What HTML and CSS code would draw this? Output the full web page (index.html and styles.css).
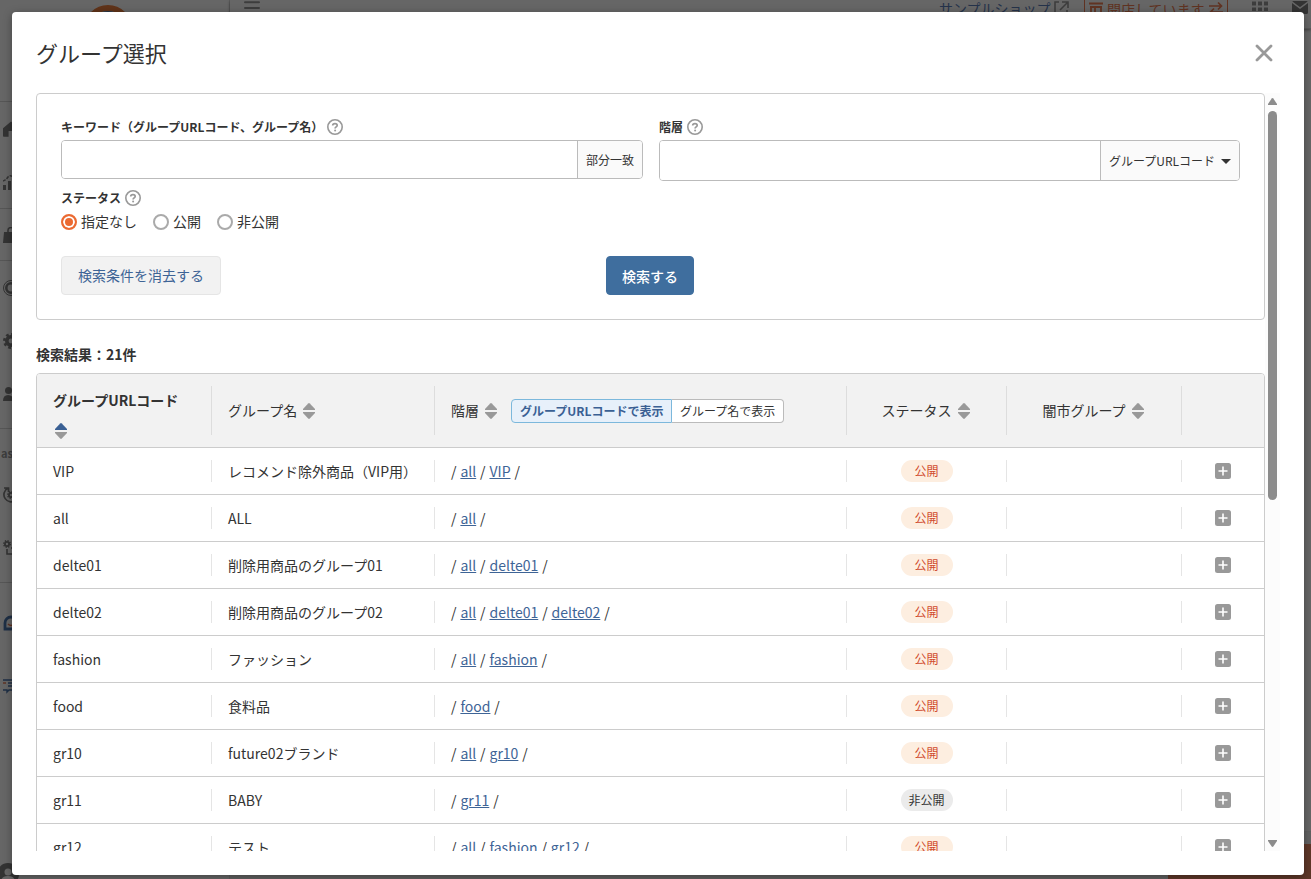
FILE: index.html
```html
<!DOCTYPE html>
<html lang="ja">
<head>
  <meta charset="UTF-8">
  <meta name="viewport" content="width=device-width, initial-scale=1">
  <title>グループ選択</title>
  <link rel="stylesheet" href="styles.css">
</head>
<body>

<!-- アイコン -->
<svg class="symbols">
  <symbol id="i-help" viewBox="0 0 16 16"><circle cx="8" cy="8" r="7.2" fill="none" stroke="#999" stroke-width="1.6"/><path d="M5.7 6.5C5.7 5.1 6.8 4.6 8 4.6s2.2.6 2.2 1.8c0 1.4-2.1 1.5-2.1 3" fill="none" stroke="#999" stroke-width="1.7"/><circle cx="8.1" cy="11.5" r="1" fill="#999"/></symbol>
  <symbol id="i-sort" viewBox="0 0 12 16"><path d="M5.2.5q.8-.8 1.6 0L12 6v1H0V6z"/><path d="M5.2 15.5q.8.8 1.6 0L12 10V9H0v1z" fill="#999"/></symbol>
  <symbol id="i-plus" viewBox="0 0 16 16"><rect width="16" height="16" rx="2.5" fill="#999"/><path d="M8 3.5v9M3.5 8h9" stroke="#fff" stroke-width="1.6"/></symbol>
  <symbol id="i-gear" viewBox="0 0 16 16"><circle cx="8" cy="8" r="4.2" fill="none" stroke="#808080" stroke-width="3.6"/><circle cx="8" cy="8" r="6.6" fill="none" stroke="#808080" stroke-width="2.8" stroke-dasharray="2.7 2.48"/></symbol>
</svg>

<!-- 背面のページ -->
<div class="page">
  <nav class="sidebar">
    <div class="logo"><svg width="48" height="28" viewBox="0 0 48 28"><circle cx="24" cy="29" r="21" fill="none" stroke="#f08040" stroke-width="6"/><circle cx="24" cy="29" r="18" fill="#6484a8"/></svg></div>
    <div class="nav-section">
      <div class="nav-item"><svg width="16" height="16" viewBox="0 0 16 16"><path d="M8 .5 0 7.2V15q0 .7.8.7h4.8V10h4.8v5.7h5V7z"/></svg></div>
      <div class="nav-item"><svg width="16" height="16" viewBox="0 0 16 16"><path d="M0 11h3v5H0zM5 7h3v9H5zM10 8h3v8h-3z"/><path d="M0 7q3-1 5-4t7 1" fill="none" stroke="#808080" stroke-dasharray="3 1.2" stroke-width="1.6"/></svg></div>
    </div>
    <div class="nav-section">
      <div class="nav-item short"><svg width="16" height="16" viewBox="0 0 16 16"><path d="M1 5h14l1 11H0z"/><path d="M5 8V3q0-2.4 3-2.4T11 3v5" fill="none" stroke="#808080" stroke-width="1.5"/></svg></div>
    </div>
    <div class="nav-section pad">
      <div class="nav-item"><svg width="16" height="16" viewBox="0 0 16 16" fill="none" stroke="#808080"><circle cx="8" cy="8" r="7.5"/><circle cx="8" cy="8" r="4.7" stroke-width="2.6"/></svg></div>
      <div class="nav-item"><svg width="16" height="16"><use href="#i-gear"/></svg></div>
      <div class="nav-item"><svg width="16" height="16" viewBox="0 0 16 16"><circle cx="5.5" cy="4.5" r="3.5"/><path d="M0 15q0-6 5-6t6 6z"/><circle cx="12" cy="11" r="3"/></svg></div>
    </div>
    <div class="nav-section last">
      <div class="nav-text">as</div>
      <div class="nav-item"><svg width="16" height="16" viewBox="0 0 16 16"><path d="M5 1a7.3 7.3 0 1 0 8 1M1 1h4.5v4" fill="none" stroke="#808080" stroke-width="1.7"/><svg x="4" y="4" width="8" height="8"><use href="#i-gear"/></svg></svg></div>
      <div class="nav-item"><svg width="16" height="16" viewBox="0 0 16 16"><svg width="8" height="8"><use href="#i-gear"/></svg><path d="M4 9v5h9V8H8" fill="none" stroke="#808080" stroke-width="1.6"/></svg></div>
    </div>
    <div class="nav-item tall"><svg width="16" height="16" viewBox="0 0 16 16"><path d="M2 14V8a6 6 0 1 1 6 6z" fill="none" stroke="#4c76ad" stroke-width="2.8"/><path d="M5 9q3 3 6 0" fill="none" stroke="#e87950" stroke-width="1.6"/></svg></div>
    <div class="nav-item tall"><svg width="16" height="16" viewBox="0 0 16 16" fill="none" stroke="#4c76ad" stroke-width="1.4"><path d="M0 2h15v10H6l-2 2v-2H0M5 5h8M5 8h8"/><path d="M0 5h3" stroke="#e87950"/></svg></div>
    <div class="account"><svg width="22" height="22" viewBox="0 0 22 22"><circle cx="11" cy="11" r="11" fill="#808080"/><circle cx="11" cy="9" r="3.5" fill="#fff"/><path d="M4 19q0-6 7-6t7 6z" fill="#fff"/></svg></div>
  </nav>
  <div class="main">
    <header class="topbar">
      <svg class="menu" width="16" height="11" viewBox="0 0 16 11"><path d="M1 2.3h14M1 8.1h14" stroke="#999" stroke-width="2" stroke-linecap="round"/></svg>
      <span class="shop">サンプルショップ</span>
      <svg class="ext" width="16" height="16" viewBox="0 0 16 16" fill="none" stroke="#999" stroke-width="1.6"><path d="M5 2H1v12h12v-4M8 2h6v6M14 2 6 10"/></svg>
      <span class="open-state">
        <svg width="14" height="14" viewBox="0 0 14 14" fill="none" stroke="#f08055" stroke-width="1.8"><path d="M0 1.5h14M1 5h12M2 5v9M6 5v6h6V5"/></svg>
        開店しています
        <svg width="14" height="14" viewBox="0 0 14 14" fill="none" stroke="#f08055" stroke-width="1.7"><path d="M0 4h12M9 .5 12.5 4 9 7.5M14 10H2M5 6.5 1.5 10 5 13.5"/></svg>
      </span>
      <svg class="apps" width="16" height="16" viewBox="0 0 16 16"><path d="M0 2.5h16M0 8.5h16M0 14.5h16" stroke="#999" stroke-width="4" stroke-dasharray="4 2"/></svg>
      <svg class="mail" width="16" height="13" viewBox="0 0 16 13"><rect width="16" height="13" rx="1.5" fill="#808080"/><path d="m0 1 8 6 8-6" fill="none" stroke="#fff" stroke-width="1.5"/></svg>
    </header>
    <footer class="actionbar"><div class="save"></div></footer>
  </div>
</div>

<!-- グループ選択モーダル -->
<div class="overlay">
<div class="modal">
  <div class="modal-header">
    <h1>グループ選択</h1>
    <svg class="close" width="18" height="18" viewBox="0 0 18 18"><path d="m2 2 14 14M16 2 2 16" stroke="#999" stroke-width="2.8" stroke-linecap="round"/></svg>
  </div>

  <div class="modal-body">
    <div class="content">
      <form class="search">
        <div class="fields">
          <div class="field">
            <div class="label">キーワード（グループURLコード、グループ名）<svg width="16" height="16"><use href="#i-help"/></svg></div>
            <div class="input-group"><input type="text"><span class="addon match">部分一致</span></div>
          </div>
          <div class="field">
            <div class="label">階層<svg width="16" height="16"><use href="#i-help"/></svg></div>
            <div class="input-group level"><input type="text"><span class="addon select">グループURLコード<i class="caret"></i></span></div>
          </div>
        </div>
        <div class="label">ステータス<svg width="16" height="16"><use href="#i-help"/></svg></div>
        <div class="radios">
          <label><i class="radio checked"></i><span>指定なし</span></label>
          <label><i class="radio"></i><span>公開</span></label>
          <label><i class="radio"></i><span>非公開</span></label>
        </div>
        <div class="buttons">
          <button type="button" class="btn btn-clear">検索条件を消去する</button>
          <button type="button" class="btn btn-search">検索する</button>
        </div>
      </form>

      <p class="count">検索結果：21件</p>

      <table class="groups">
        <colgroup><col class="c1"><col class="c2"><col class="c3"><col class="c4"><col class="c5"><col class="c6"></colgroup>
        <thead>
          <tr>
            <th><div class="cell sorted"><b>グループURLコード</b><svg class="sort asc"><use href="#i-sort"/></svg></div></th>
            <th><div class="cell"><span>グループ名</span><svg class="sort"><use href="#i-sort"/></svg></div></th>
            <th><div class="cell"><span>階層</span><svg class="sort"><use href="#i-sort"/></svg><div class="toggle"><div class="on">グループURLコードで表示</div><div>グループ名で表示</div></div></div></th>
            <th><div class="cell center"><span>ステータス</span><svg class="sort"><use href="#i-sort"/></svg></div></th>
            <th><div class="cell center"><span>闇市グループ</span><svg class="sort"><use href="#i-sort"/></svg></div></th>
            <th><div class="cell"></div></th>
          </tr>
        </thead>
        <tbody>
          <tr>
            <td><div class="cell">VIP</div></td>
            <td><div class="cell">レコメンド除外商品（VIP用）</div></td>
            <td><div class="cell path"><span>/ <a>all</a> / <a>VIP</a> /</span></div></td>
            <td><div class="cell center"><span class="badge">公開</span></div></td>
            <td><div class="cell"></div></td>
            <td><div class="cell center"><svg width="16" height="16"><use href="#i-plus"/></svg></div></td>
          </tr>
          <tr>
            <td><div class="cell">all</div></td>
            <td><div class="cell">ALL</div></td>
            <td><div class="cell path"><span>/ <a>all</a> /</span></div></td>
            <td><div class="cell center"><span class="badge">公開</span></div></td>
            <td><div class="cell"></div></td>
            <td><div class="cell center"><svg width="16" height="16"><use href="#i-plus"/></svg></div></td>
          </tr>
          <tr>
            <td><div class="cell">delte01</div></td>
            <td><div class="cell">削除用商品のグループ01</div></td>
            <td><div class="cell path"><span>/ <a>all</a> / <a>delte01</a> /</span></div></td>
            <td><div class="cell center"><span class="badge">公開</span></div></td>
            <td><div class="cell"></div></td>
            <td><div class="cell center"><svg width="16" height="16"><use href="#i-plus"/></svg></div></td>
          </tr>
          <tr>
            <td><div class="cell">delte02</div></td>
            <td><div class="cell">削除用商品のグループ02</div></td>
            <td><div class="cell path"><span>/ <a>all</a> / <a>delte01</a> / <a>delte02</a> /</span></div></td>
            <td><div class="cell center"><span class="badge">公開</span></div></td>
            <td><div class="cell"></div></td>
            <td><div class="cell center"><svg width="16" height="16"><use href="#i-plus"/></svg></div></td>
          </tr>
          <tr>
            <td><div class="cell">fashion</div></td>
            <td><div class="cell">ファッション</div></td>
            <td><div class="cell path"><span>/ <a>all</a> / <a>fashion</a> /</span></div></td>
            <td><div class="cell center"><span class="badge">公開</span></div></td>
            <td><div class="cell"></div></td>
            <td><div class="cell center"><svg width="16" height="16"><use href="#i-plus"/></svg></div></td>
          </tr>
          <tr>
            <td><div class="cell">food</div></td>
            <td><div class="cell">食料品</div></td>
            <td><div class="cell path"><span>/ <a>food</a> /</span></div></td>
            <td><div class="cell center"><span class="badge">公開</span></div></td>
            <td><div class="cell"></div></td>
            <td><div class="cell center"><svg width="16" height="16"><use href="#i-plus"/></svg></div></td>
          </tr>
          <tr>
            <td><div class="cell">gr10</div></td>
            <td><div class="cell">future02ブランド</div></td>
            <td><div class="cell path"><span>/ <a>all</a> / <a>gr10</a> /</span></div></td>
            <td><div class="cell center"><span class="badge">公開</span></div></td>
            <td><div class="cell"></div></td>
            <td><div class="cell center"><svg width="16" height="16"><use href="#i-plus"/></svg></div></td>
          </tr>
          <tr>
            <td><div class="cell">gr11</div></td>
            <td><div class="cell">BABY</div></td>
            <td><div class="cell path"><span>/ <a>gr11</a> /</span></div></td>
            <td><div class="cell center"><span class="badge private">非公開</span></div></td>
            <td><div class="cell"></div></td>
            <td><div class="cell center"><svg width="16" height="16"><use href="#i-plus"/></svg></div></td>
          </tr>
          <tr>
            <td><div class="cell">gr12</div></td>
            <td><div class="cell">テスト</div></td>
            <td><div class="cell path"><span>/ <a>all</a> / <a>fashion</a> / <a>gr12</a> /</span></div></td>
            <td><div class="cell center"><span class="badge">公開</span></div></td>
            <td><div class="cell"></div></td>
            <td><div class="cell center"><svg width="16" height="16"><use href="#i-plus"/></svg></div></td>
          </tr>
        </tbody>
      </table>
    </div>

    <div class="scrollbar">
      <svg width="9" height="7" viewBox="0 0 9 7"><path d="M3.7.5q.8-.8 1.6 0L9 6v1H0V6z" fill="#8b8b8b"/></svg>
      <div class="thumb"></div>
      <svg class="down" width="9" height="7" viewBox="0 0 9 7"><path d="M3.7 6.5q.8.8 1.6 0L9 1V0H0v1z" fill="#8b8b8b"/></svg>
    </div>
  </div>
</div>
</div>

</body>
</html>
```
FILE: styles.css
```css
* { box-sizing: border-box; }
body {
  margin: 0;
  height: 879px;
  overflow: hidden;
  font-family: "Noto Sans CJK JP", sans-serif;
  font-size: 14px;
  line-height: 22px;
  color: #333;
}
svg { display: block; flex: none; }
.symbols { position: absolute; width: 0; height: 0; }

/* 背面のページ */
.page { display: flex; height: 879px; background: #fff; }
.sidebar {
  width: 230px;
  border-right: 1px solid #e8e8e8;
  display: flex;
  flex-direction: column;
  fill: #808080;
}
.logo {
  height: 102px;
  padding-left: 84px;
  border-bottom: 1px solid #d8d8d8;
}
.nav-section { border-bottom: 1px solid #d8d8d8; }
.nav-section.pad { padding: 0 0 8px; }
.nav-section.last { height: 154px; padding-top: 13px; }
.nav-item {
  height: 53px;
  padding-left: 3px;
  display: flex;
  align-items: center;
}
.nav-item.short { height: 51px; }
.nav-item.tall { height: 63px; }
.nav-section.last + .nav-item { margin-top: 8px; }
.nav-text {
  height: 26px;
  padding-left: 1px;
  font-size: 11px;
  font-weight: bold;
  color: #999;
}
.account { margin-top: auto; margin-left: -3px; height: 16px; }
.main { flex: 1; display: flex; flex-direction: column; }
.topbar {
  height: 29px;
  padding-left: 14px;
  display: flex;
  align-items: flex-start;
  border-bottom: 1px solid #ddd;
  box-shadow: 0 1px 3px rgba(0,0,0,0.4);
}
.menu { margin-right: 679px; }
.shop { font-size: 14px; line-height: 16px; color: #5c81bb; width: 112px; }
.ext { margin-left: 3px; }
.open-state {
  height: 26px;
  width: 144px;
  margin: -8px 0 0 14px;
  padding: 8px 4px 0;
  border: 1px solid #f08055;
  display: flex;
  gap: 4px;
  line-height: 16px;
  color: #f08055;
  white-space: nowrap;
}
.open-state svg { margin-top: 1px; }
.apps { margin: -5px 0 0 24px; }
.mail { margin: 1px 0 0 24px; }
.actionbar {
  margin-top: auto;
  height: 48px;
  padding-top: 12px;
  border-top: 1px solid #eee;
  background: #f3f3f3;
  display: flex;
  justify-content: flex-end;
}
.save { width: 143px; background: #ec8a64; }

/* モーダル */
.overlay {
  position: absolute;
  inset: 0;
  padding: 12px 7px 4px 12px;
  background: rgba(0,0,0,0.6);
}
.modal {
  height: 863px;
  padding: 0 24px;
  background: #fff;
  border-radius: 4px;
  box-shadow: 0 2px 8px rgba(0,0,0,0.35);
}
.modal-header {
  height: 81px;
  padding-right: 7px;
  display: flex;
  align-items: center;
  justify-content: space-between;
}
.modal-header h1 {
  margin: 0 0 1px;
  font-size: 22px;
  font-weight: normal;
  line-height: 32px;
}
.modal-body { height: 758px; display: flex; overflow: hidden; }
.content { width: 1229px; flex: none; }
.scrollbar {
  width: 15px;
  padding: 5px 3px 4px;
  background: #fcfcfc;
  display: flex;
  flex-direction: column;
}
.thumb { height: 389px; margin-top: 6px; border-radius: 5px; background: #8b8b8b; width: 9px; }
.down { margin-top: auto; }

/* 検索フォーム */
.search {
  height: 227px;
  padding: 24px;
  border: 1px solid #ccc;
  border-radius: 4px;
}
.fields { display: flex; gap: 16px; margin-bottom: 8px; }
.field { width: 582px; }
.field + .field { width: 581px; }
.label {
  height: 18px;
  display: flex;
  align-items: center;
  gap: 4px;
  font-size: 12px;
  font-weight: bold;
}
.field .label { margin-bottom: 4px; }
.input-group {
  height: 39px;
  display: flex;
  border: 1px solid #bbb;
  border-radius: 4px;
  overflow: hidden;
}
.input-group.level { height: 41px; }
.input-group input { flex: 1; min-width: 0; border: 0; outline: 0; background: #fff; }
.addon {
  display: flex;
  align-items: center;
  padding-left: 8px;
  border-left: 1px solid #bbb;
  background: #fafafa;
  font-size: 12px;
}
.match { width: 65px; }
.select { width: 139px; }
.caret {
  margin: 1px 0 0 6px;
  border: 5px solid transparent;
  border-top-color: #333;
  border-bottom: 0;
}
.radios { display: flex; gap: 16px; margin: 4px 0 23px; }
.radios label { display: flex; align-items: center; gap: 4px; height: 22px; }
.radios label span { padding-bottom: 2px; }
.radio {
  width: 16px;
  height: 16px;
  border: 2px solid #aaa;
  border-radius: 50%;
}
.radio.checked {
  border-color: #eb6a32;
  background: #eb6a32;
  box-shadow: inset 0 0 0 2px #fff;
}
.buttons { display: flex; gap: 385px; }
.btn {
  height: 39px;
  padding: 0 0 2px;
  border: 1px solid #e5e5e5;
  border-radius: 4px;
  font: inherit;
  white-space: nowrap;
}
.btn-clear { width: 160px; background: #f2f2f2; color: #3e6496; }
.btn-search { width: 88px; padding: 0; border-color: #3f6e9e; background: #3f6e9e; color: #fff; font-weight: 500; }
.count { margin: 23px 0 8px; font-weight: bold; }

/* 一覧 */
.groups {
  width: 1229px;
  table-layout: fixed;
  border: 1px solid #ccc;
  border-radius: 4px 4px 0 0;
  border-spacing: 0;
  overflow: hidden;
}
.c1 { width: 175px; }
.c2 { width: 223px; }
.c3 { width: 412px; }
.c4 { width: 160px; }
.c5 { width: 175px; }
.c6 { width: 82px; }
.groups th, .groups td {
  padding: 12px 0;
  border-bottom: 1px solid #ccc;
  font-weight: normal;
  text-align: left;
}
.groups th { background: #f2f2f2; }
.cell {
  height: 22px;
  padding-left: 16px;
  display: flex;
  align-items: center;
  border-right: 1px solid #e5e5e5;
  white-space: nowrap;
}
th .cell { height: 49px; border-color: #ddd; }
th .cell > span { padding-bottom: 2px; }
th:last-child .cell, td:last-child .cell { border-right: 0; }
.cell.center { padding: 0; justify-content: center; }
th .cell.center { padding-right: 2px; }
.cell.sorted { flex-direction: column; align-items: flex-start; padding-top: 3px; }
.sort { width: 12px; height: 16px; margin-left: 6px; fill: #999; }
.sort.asc { margin: 12px 0 0 2px; fill: #3a6094; }
.path { word-spacing: 0.75px; }
.cell a { color: #3e6496; text-decoration: underline; }
.toggle { display: flex; margin-left: 14px; font-size: 12px; }
.toggle div {
  height: 24px;
  width: 112px;
  padding-left: 8px;
  border: 1px solid #bbb;
  border-left: 0;
  border-radius: 0 4px 4px 0;
  background: #fff;
}
.toggle .on {
  width: 161px;
  border: 1px solid #7cb8dc;
  border-radius: 4px 0 0 4px;
  background: #e7f0fa;
  color: #3a6094;
  font-weight: bold;
}
.badge {
  width: 52px;
  height: 22px;
  border-radius: 11px;
  background: #fdeee0;
  color: #d04a2c;
  font-size: 12px;
  text-align: center;
}
.badge.private { background: #ebebeb; color: #333; }
```
